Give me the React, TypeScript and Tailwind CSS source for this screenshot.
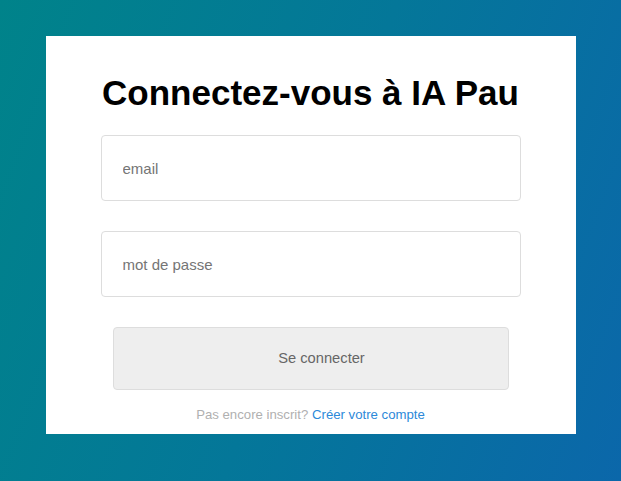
export default function App() {
  return (
    <div
      className="w-full h-[481px] overflow-hidden bg-[linear-gradient(110deg,#00838a_0%,#047799_50%,#0b67aa_100%)] pt-[36px]"
      style={{ fontFamily: '"Liberation Sans", Arial, sans-serif' }}
    >
      <div className="mx-auto w-[530px] h-[398px] bg-white flex flex-col items-center">
        <h1 className="mt-[37px] text-[35px] leading-[40px] font-bold text-black whitespace-nowrap">
          Connectez-vous à IA Pau
        </h1>
        <input
          type="email"
          placeholder="email"
          className="mt-[22px] w-[420px] h-[66px] border border-[#dddddd] rounded-[4px] pl-[21px] text-[15px] text-[#333] placeholder:text-[#757575] outline-none"
        />
        <input
          type="password"
          placeholder="mot de passe"
          className="mt-[30px] w-[420px] h-[66px] border border-[#dddddd] rounded-[4px] pl-[21px] text-[15px] text-[#333] placeholder:text-[#757575] outline-none"
        />
        <button className="mt-[30px] w-[396px] h-[63px] bg-[#eeeeee] border border-[#dddddd] rounded-[4px] pl-[22px] text-[14.7px] text-[#666666]">
          Se connecter
        </button>
        <p className="mt-[17px] text-[13.2px] leading-[16px] text-[#b0b0b0]">
          Pas encore inscrit?{" "}
          <a href="#" className="text-[#2c89d9]">
            Créer votre compte
          </a>
        </p>
      </div>
    </div>
  );
}
